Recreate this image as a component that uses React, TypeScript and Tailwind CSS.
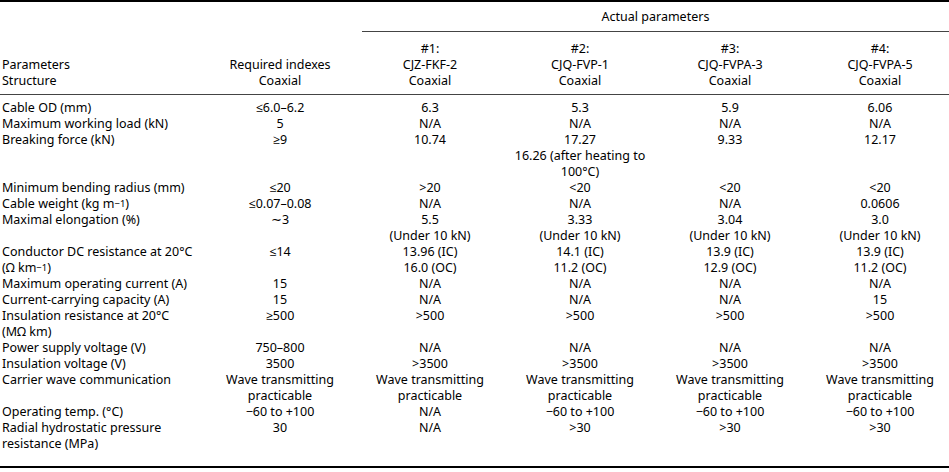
import React from "react";

const Sup = ({ children }: { children: React.ReactNode }) => (
  <sup className="text-[9.5px] leading-none relative top-[-1px]">{children}</sup>
);

type Row = { label: React.ReactNode[]; cells: string[][] };

const U = "(Under 10 kN)";
const W = ["Wave transmitting", "practicable"];

const rows: Row[] = [
  { label: ["Cable OD (mm)"], cells: [["≤6.0–6.2"], ["6.3"], ["5.3"], ["5.9"], ["6.06"]] },
  { label: ["Maximum working load (kN)"], cells: [["5"], ["N/A"], ["N/A"], ["N/A"], ["N/A"]] },
  {
    label: ["Breaking force (kN)"],
    cells: [["≥9"], ["10.74"], ["17.27", "16.26 (after heating to", "100°C)"], ["9.33"], ["12.17"]],
  },
  { label: ["Minimum bending radius (mm)"], cells: [["≤20"], [">20"], ["<20"], ["<20"], ["<20"]] },
  {
    label: [
      <>
        Cable weight (kg m<Sup>−1</Sup>)
      </>,
    ],
    cells: [["≤0.07–0.08"], ["N/A"], ["N/A"], ["N/A"], ["0.0606"]],
  },
  {
    label: ["Maximal elongation (%)"],
    cells: [["∼3"], ["5.5", U], ["3.33", U], ["3.04", U], ["3.0", U]],
  },
  {
    label: [
      "Conductor DC resistance at 20°C",
      <>
        (Ω km<Sup>−1</Sup>)
      </>,
    ],
    cells: [
      ["≤14"],
      ["13.96 (IC)", "16.0 (OC)"],
      ["14.1 (IC)", "11.2 (OC)"],
      ["13.9 (IC)", "12.9 (OC)"],
      ["13.9 (IC)", "11.2 (OC)"],
    ],
  },
  { label: ["Maximum operating current (A)"], cells: [["15"], ["N/A"], ["N/A"], ["N/A"], ["N/A"]] },
  { label: ["Current-carrying capacity (A)"], cells: [["15"], ["N/A"], ["N/A"], ["N/A"], ["15"]] },
  {
    label: ["Insulation resistance at 20°C", "(MΩ km)"],
    cells: [["≥500"], [">500"], [">500"], [">500"], [">500"]],
  },
  { label: ["Power supply voltage (V)"], cells: [["750–800"], ["N/A"], ["N/A"], ["N/A"], ["N/A"]] },
  { label: ["Insulation voltage (V)"], cells: [["3500"], [">3500"], [">3500"], [">3500"], [">3500"]] },
  { label: ["Carrier wave communication"], cells: [W, W, W, W, W] },
  {
    label: ["Operating temp. (°C)"],
    cells: [["−60 to +100"], ["N/A"], ["−60 to +100"], ["−60 to +100"], ["−60 to +100"]],
  },
  {
    label: ["Radial hydrostatic pressure", "resistance (MPa)"],
    cells: [["30"], ["N/A"], [">30"], [">30"], [">30"]],
  },
];

export default function App() {
  return (
    <div
      className="w-[949px] h-[472px] bg-white text-black text-[12.5px] leading-[16px] overflow-hidden"
      style={{ fontFamily: '"Noto Sans", "Open Sans", sans-serif' }}
    >
      <div className="border-t-2 border-black" />
      <div className="grid grid-cols-[205px_150px_150px_150px_150px_150px] whitespace-nowrap">
        {/* header row 1 */}
        <div className="col-span-2" />
        <div className="col-span-4 pl-[7px]">
          <div className="border-b border-[#444] h-[30px] flex items-center justify-center pr-[6px]">
            Actual parameters
          </div>
        </div>
        {/* header row 2 */}
        <div className="col-span-6 grid grid-cols-subgrid border-b border-[#444] pt-[9px] pb-[5px]">
          <div className="pl-[2px] flex flex-col justify-end">
            <div>Parameters</div>
            <div>Structure</div>
          </div>
          <div className="flex flex-col justify-end items-center">
            <div>Required indexes</div>
            <div>Coaxial</div>
          </div>
          {[
            ["#1:", "CJZ-FKF-2"],
            ["#2:", "CJQ-FVP-1"],
            ["#3:", "CJQ-FVPA-3"],
            ["#4:", "CJQ-FVPA-5"],
          ].map(([a, b]) => (
            <div key={a} className="flex flex-col items-center">
              <div>{a}</div>
              <div>{b}</div>
              <div>Coaxial</div>
            </div>
          ))}
        </div>
        {/* body */}
        <div className="col-span-6 grid grid-cols-subgrid pt-[5px] pb-[14px] border-b-2 border-black">
          {rows.map((r, i) => (
            <React.Fragment key={i}>
              <div className="pl-[2px]">
                {r.label.map((l, k) => (
                  <div key={k}>{l}</div>
                ))}
              </div>
              {r.cells.map((c, j) => (
                <div key={j} className="text-center">
                  {c.map((t, k) => (
                    <div key={k}>{t}</div>
                  ))}
                </div>
              ))}
            </React.Fragment>
          ))}
        </div>
      </div>
    </div>
  );
}
